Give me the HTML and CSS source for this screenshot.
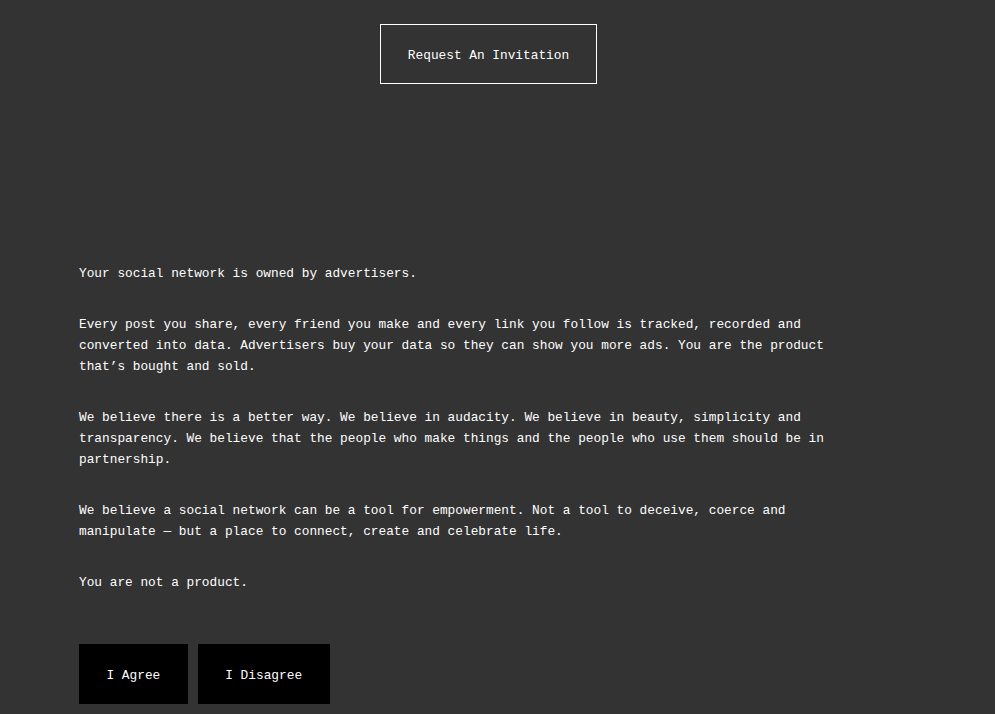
FILE: index.html
```html
<!DOCTYPE html>
<html>
  <head>
    <meta charset="UTF-8" />
    <meta name="viewport" content="width=device-width, initial-scale=1" />
    <link rel="stylesheet" href="styles.css">
  </head>
  <body>
    <div class="page">
      <header class="top">
        <a class="invite" href="#">Request An Invitation</a>
      </header>

      <main class="manifesto">
        <p>Your social network is owned by advertisers.</p>
        <p>Every post you share, every friend you make and every link you follow is tracked, recorded and converted into data. Advertisers buy your data so they can show you more ads. You are the product that’s bought and sold.</p>
        <p>We believe there is a better way. We believe in audacity. We believe in beauty, simplicity and transparency. We believe that the people who make things and the people who use them should be in partnership.</p>
        <p>We believe a social network can be a tool for empowerment. Not a tool to deceive, coerce and manipulate — but a place to connect, create and celebrate life.</p>
        <p>You are not a product.</p>

        <div class="choices">
          <a class="choice" href="#">I Agree</a>
          <a class="choice" href="#">I Disagree</a>
        </div>
      </main>
    </div>
  </body>
</html>
```

FILE: styles.css
```css
* {
  box-sizing: border-box;
}

body {
  margin: 0px;
  padding: 0px;
  background-color: #333333;
  color: #ffffff;
  font-family: "Liberation Mono", "DejaVu Sans Mono", monospace;
  font-size: 12.8px;
  line-height: 21px;
}

a {
  color: #ffffff;
  text-decoration: none;
}

.page {
  padding: 24px 0 0 79px;
}

.top {
  width: 819px;
  display: flex;
  justify-content: center;
}

.invite {
  display: block;
  height: 60px;
  padding: 4px 27px 0 27px;
  line-height: 54px;
  border: 1px solid #ffffff;
}

.manifesto {
  width: 760px;
  margin-top: 179px;
}

.manifesto p {
  margin: 0 0 30px 0;
}

.choices {
  display: flex;
  gap: 10px;
  margin-top: 51px;
}

.choice {
  display: block;
  height: 60px;
  padding: 3px 27.5px 0 27.5px;
  line-height: 57px;
  background-color: #000000;
}
```
